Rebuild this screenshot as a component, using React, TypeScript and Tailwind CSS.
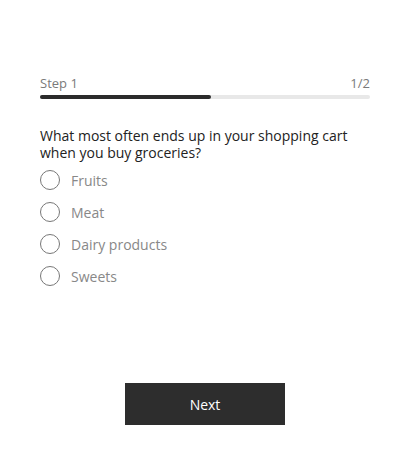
const options = ["Fruits", "Meat", "Dairy products", "Sweets"]

export default function App() {
  return (
    <div className="w-[410px] h-[466px] bg-white font-['Open_Sans',sans-serif] px-10 pt-[74px]">
      <div className="flex justify-between text-[13px] leading-[18px] text-[#7a7a7a]">
        <span>Step 1</span>
        <span>1/2</span>
      </div>
      <div className="mt-[3px] h-1 w-full rounded-full bg-[#e8e8e8]">
        <div className="h-1 w-[171px] rounded-full bg-[#2b2b2b]" />
      </div>

      <p className="mt-[28px] text-[14px] leading-[17px] text-[#222]">
        What most often ends up in your shopping cart when you buy groceries?
      </p>

      <div className="mt-[3px] flex flex-col">
        {options.map((o) => (
          <label key={o} className="flex items-center h-[32px] gap-[11px]">
            <span className="w-5 h-5 rounded-full border border-[#777]" />
            <span className="text-[14px] text-[#888]">{o}</span>
          </label>
        ))}
      </div>

      <div className="flex justify-center mt-[91px]">
        <button className="w-[160px] h-[42px] bg-[#2d2d2d] text-white text-[14px]">Next</button>
      </div>
    </div>
  )
}
